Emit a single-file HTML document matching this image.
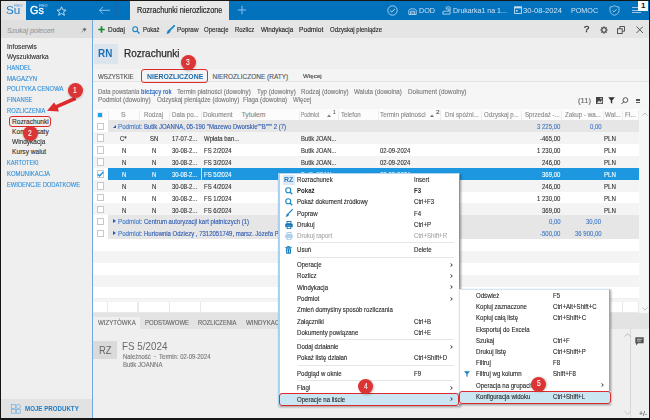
<!DOCTYPE html>
<html><head><meta charset="utf-8"><style>
html,body{margin:0;padding:0;}
body{width:650px;height:420px;overflow:hidden;position:relative;background:#161616;font-family:'Liberation Sans', sans-serif;}
</style></head><body>
<div style="position:absolute;left:1px;top:1px;width:647.5px;height:416.6px;background:#efefef;"></div>
<div style="position:absolute;left:1px;top:1px;width:647.5px;height:19px;background:#0272bd;"></div>
<div style="position:absolute;left:1px;top:1px;width:24.5px;height:19px;background:#e4e4e4;"></div>
<div style="position:absolute;left:116px;top:3px;width:0.8px;height:14px;background:#2a5f96;opacity:0.6;"></div>
<div style="position:absolute;left:130px;top:1px;width:99px;height:19.5px;background:#e8e8e8;"></div>
<div style="position:absolute;left:1px;top:20px;width:91px;height:18px;background:#dfdfdf;"></div>
<div style="position:absolute;left:1px;top:399px;width:91px;height:18.6px;background:#e2e2e2;"></div>
<div style="position:absolute;left:93px;top:20px;width:555.5px;height:18px;background:#e5e5e5;"></div>
<div style="position:absolute;left:93.5px;top:44px;width:24px;height:20px;background:#dce5ed;"></div>
<div style="position:absolute;left:93px;top:68.5px;width:555.5px;height:13.5px;background:#f4f4f4;border-bottom:1px solid #e2e2e2;box-sizing:border-box;"></div>
<div style="position:absolute;left:93px;top:82px;width:555.5px;height:26.5px;background:#f6f6f6;"></div>
<div style="position:absolute;left:93px;top:108.5px;width:546.3px;height:11.8px;background:#fcfcfc;"></div>
<div style="position:absolute;left:639.3px;top:108.5px;width:9.2px;height:204px;background:#f7f7f7;"></div>
<div style="position:absolute;left:93px;top:120.3px;width:15px;height:11.88px;background:#fff;"></div>
<div style="position:absolute;left:108px;top:120.3px;width:531.3px;height:11.88px;background:#e6e6e6;"></div>
<div style="position:absolute;left:93px;top:132.18px;width:15px;height:11.88px;background:#f4f4f4;"></div>
<div style="position:absolute;left:108px;top:132.18px;width:531.3px;height:11.88px;background:#f4f4f4;"></div>
<div style="position:absolute;left:93px;top:144.06px;width:15px;height:11.88px;background:#fff;"></div>
<div style="position:absolute;left:108px;top:144.06px;width:531.3px;height:11.88px;background:#ffffff;"></div>
<div style="position:absolute;left:93px;top:155.94px;width:15px;height:11.88px;background:#f4f4f4;"></div>
<div style="position:absolute;left:108px;top:155.94px;width:531.3px;height:11.88px;background:#f4f4f4;"></div>
<div style="position:absolute;left:93px;top:167.82px;width:15px;height:11.88px;background:#fff;"></div>
<div style="position:absolute;left:108px;top:167.82px;width:531.3px;height:11.88px;background:#1d98e0;"></div>
<div style="position:absolute;left:93px;top:179.7px;width:15px;height:11.88px;background:#f4f4f4;"></div>
<div style="position:absolute;left:108px;top:179.7px;width:531.3px;height:11.88px;background:#f4f4f4;"></div>
<div style="position:absolute;left:93px;top:191.57999999999998px;width:15px;height:11.88px;background:#fff;"></div>
<div style="position:absolute;left:108px;top:191.57999999999998px;width:531.3px;height:11.88px;background:#ffffff;"></div>
<div style="position:absolute;left:93px;top:203.46px;width:15px;height:11.88px;background:#f4f4f4;"></div>
<div style="position:absolute;left:108px;top:203.46px;width:531.3px;height:11.88px;background:#f4f4f4;"></div>
<div style="position:absolute;left:93px;top:215.34px;width:15px;height:11.88px;background:#fff;"></div>
<div style="position:absolute;left:108px;top:215.34px;width:531.3px;height:11.88px;background:#e6e6e6;"></div>
<div style="position:absolute;left:93px;top:227.22px;width:15px;height:11.88px;background:#fff;"></div>
<div style="position:absolute;left:108px;top:227.22px;width:531.3px;height:11.88px;background:#e6e6e6;"></div>
<div style="position:absolute;left:93px;top:239.10000000000002px;width:15px;height:11.88px;background:#fff;"></div>
<div style="position:absolute;left:108px;top:239.10000000000002px;width:531.3px;height:11.88px;background:#ffffff;"></div>
<div style="position:absolute;left:93px;top:250.98000000000002px;width:15px;height:11.88px;background:#f4f4f4;"></div>
<div style="position:absolute;left:108px;top:250.98000000000002px;width:531.3px;height:11.88px;background:#f4f4f4;"></div>
<div style="position:absolute;left:93px;top:262.86px;width:15px;height:11.88px;background:#fff;"></div>
<div style="position:absolute;left:108px;top:262.86px;width:531.3px;height:11.88px;background:#ffffff;"></div>
<div style="position:absolute;left:93px;top:274.74px;width:15px;height:11.88px;background:#f4f4f4;"></div>
<div style="position:absolute;left:108px;top:274.74px;width:531.3px;height:11.88px;background:#f4f4f4;"></div>
<div style="position:absolute;left:93px;top:286.62px;width:15px;height:11.88px;background:#fff;"></div>
<div style="position:absolute;left:108px;top:286.62px;width:531.3px;height:11.88px;background:#ffffff;"></div>
<div style="position:absolute;left:93px;top:298.5px;width:15px;height:11.88px;background:#f4f4f4;"></div>
<div style="position:absolute;left:108px;top:298.5px;width:531.3px;height:11.88px;background:#f4f4f4;"></div>
<div style="position:absolute;left:93px;top:302px;width:546.3px;height:10.5px;background:#e9e9e9;"></div>
<div style="position:absolute;left:93.2px;top:302px;width:13.899999999999997px;height:9.8px;background:#fff;"></div>
<div style="position:absolute;left:108.2px;top:302px;width:29.1px;height:9.8px;background:#fff;"></div>
<div style="position:absolute;left:138.5px;top:302px;width:30.29999999999999px;height:9.8px;background:#fff;"></div>
<div style="position:absolute;left:169.79999999999998px;top:302px;width:30.500000000000007px;height:9.8px;background:#fff;"></div>
<div style="position:absolute;left:201.39999999999998px;top:302px;width:96.4px;height:9.8px;background:#fff;"></div>
<div style="position:absolute;left:299.2px;top:302px;width:37.90000000000001px;height:9.8px;background:#fff;"></div>
<div style="position:absolute;left:338.5px;top:302px;width:38.6px;height:9.8px;background:#fff;"></div>
<div style="position:absolute;left:378.5px;top:302px;width:60.79999999999999px;height:9.8px;background:#fff;"></div>
<div style="position:absolute;left:440.7px;top:302px;width:39.40000000000001px;height:9.8px;background:#fff;"></div>
<div style="position:absolute;left:481.5px;top:302px;width:39.29999999999999px;height:9.8px;background:#fff;"></div>
<div style="position:absolute;left:522.2px;top:302px;width:38.6px;height:9.8px;background:#fff;"></div>
<div style="position:absolute;left:562.2px;top:302px;width:40.1px;height:9.8px;background:#fff;"></div>
<div style="position:absolute;left:603.7px;top:302px;width:18.1px;height:9.8px;background:#fff;"></div>
<div style="position:absolute;left:623.2px;top:302px;width:15.1px;height:9.8px;background:#fff;"></div>
<div style="position:absolute;left:93px;top:312.5px;width:555.5px;height:105.1px;background:#efefef;"></div>
<div style="position:absolute;left:93px;top:312.5px;width:555.5px;height:16.5px;background:#e3e3e3;"></div>
<div style="position:absolute;left:93px;top:316.6px;width:47px;height:12.4px;background:#efefef;"></div>
<div style="position:absolute;left:93px;top:340.6px;width:24px;height:18.8px;background:#dadada;"></div>
<svg style="position:absolute;left:56px;top:6px" width="11" height="10" viewBox="0 0 11 10"><path d="M5.5 0.8 L6.8 3.9 L10 4.1 L7.5 6.1 L8.4 9.3 L5.5 7.5 L2.6 9.3 L3.5 6.1 L1 4.1 L4.2 3.9 Z" fill="none" stroke="#cfe4f6" stroke-width="0.9" stroke-linejoin="round"/></svg>
<svg style="position:absolute;left:97.5px;top:5px" width="13" height="11" viewBox="0 0 13 11"><path d="M12 5.3 H1.5 M5 1.8 L1.5 5.3 L5 8.8" fill="none" stroke="#8dbfe8" stroke-width="1"/></svg>
<svg style="position:absolute;left:237px;top:5px" width="10" height="10" viewBox="0 0 10 10"><path d="M5 0.8 V9.2 M0.8 5 H9.2" stroke="#86bce6" stroke-width="1.1"/></svg>
<svg style="position:absolute;left:386.5px;top:4.5px" width="11" height="11" viewBox="0 0 11 11"><circle cx="5.5" cy="5.5" r="4.7" fill="none" stroke="#b9d7f0" stroke-width="0.9"/><path d="M3.2 5.6 L4.8 7 L7.8 4" fill="none" stroke="#d8eaf8" stroke-width="0.9"/></svg>
<svg style="position:absolute;left:407.5px;top:6.5px" width="9" height="8" viewBox="0 0 9 8"><path d="M0.8 7.5 V3.2 C2 1.2 7 1.2 8.2 3.2 V7.5 Z M2.6 7.5 V4.2 H6.4 V7.5 M3.2 6 H5.8" fill="none" stroke="#c9e0f4" stroke-width="0.8"/></svg>
<svg style="position:absolute;left:441.5px;top:5.5px" width="9" height="9" viewBox="0 0 9 9"><path d="M0.9 8.1 H8.1 V1.3 C7 0.6 5.5 0.6 4.2 1.3 V3 H7 V5.2 H3.3 L2.6 4.4 M2.6 5.6 H0.9 V8.1" fill="none" stroke="#c9e0f4" stroke-width="0.8"/></svg>
<svg style="position:absolute;left:513.5px;top:6px" width="8" height="8" viewBox="0 0 8 8"><rect x="0.6" y="0.8" width="6.8" height="6.6" fill="none" stroke="#c9e0f4" stroke-width="0.9"/><rect x="0.6" y="0.8" width="6.8" height="1.6" fill="#c9e0f4"/><rect x="2" y="4" width="1.6" height="1.5" fill="#c9e0f4"/></svg>
<svg style="position:absolute;left:608.5px;top:5px" width="11" height="11" viewBox="0 0 11 11"><path d="M5.5 0.7 C4 1.6 2.5 2 1 2 V5.5 C1 8 3 9.5 5.5 10.3 C8 9.5 10 8 10 5.5 V2 C8.5 2 7 1.6 5.5 0.7 Z" fill="none" stroke="#b9d7f0" stroke-width="0.8"/><path d="M3.6 5.6 L5 6.9 L7.5 4.2" fill="none" stroke="#c9e0f4" stroke-width="0.8"/></svg>
<div style="position:absolute;left:632.4px;top:7px;width:9px;height:0.8px;background:#9cc7ea;"></div>
<div style="position:absolute;left:632.4px;top:9.6px;width:9px;height:0.8px;background:#9cc7ea;"></div>
<div style="position:absolute;left:632.4px;top:12.2px;width:9px;height:0.8px;background:#9cc7ea;"></div>
<svg style="position:absolute;left:81px;top:27px" width="6" height="6" viewBox="0 0 6 6"><path d="M0.5 5.5 L2.3 3.7" stroke="#888" stroke-width="0.8"/><path d="M3.6 0.4 L5.6 2.4 L4.8 2.8 L3.9 4.4 L4.2 5 L1 1.8 L1.6 2.1 L3.2 1.2 Z" fill="#6f6f6f"/></svg>
<svg style="position:absolute;left:10.5px;top:404px" width="10" height="10" viewBox="0 0 10 10"><g fill="none" stroke="#74b0e0" stroke-width="0.7"><rect x="0.6" y="0.6" width="3.8" height="3.8"/><rect x="5.4" y="0.6" width="3.8" height="3.8" rx="1"/><rect x="0.6" y="5.4" width="3.8" height="3.8"/><rect x="5.4" y="5.4" width="3.8" height="3.8"/></g></svg>
<div style="position:absolute;left:92px;top:20px;width:1px;height:397.6px;background:#6eaadc;"></div>
<svg style="position:absolute;left:97.5px;top:25.5px" width="7" height="7" viewBox="0 0 7 7"><path d="M3.5 0.3 V6.7 M0.3 3.5 H6.7" stroke="#178a32" stroke-width="1.7"/></svg>
<svg style="position:absolute;left:131.5px;top:25.5px" width="8" height="8" viewBox="0 0 8 8"><circle cx="3.2" cy="3.2" r="2.4" fill="none" stroke="#1a86c8" stroke-width="1.1"/><path d="M4.9 4.9 L7.5 7.5" stroke="#1a86c8" stroke-width="1.3"/></svg>
<svg style="position:absolute;left:166px;top:25px" width="9" height="9" viewBox="0 0 9 9"><path d="M8.5 0.5 L3.6 5.4" stroke="#1a86c8" stroke-width="1.6" stroke-linecap="round"/><path d="M3.8 4.6 C2.2 4.6 1.5 5.6 1.3 6.8 C1.1 7.7 0.7 8.2 0.2 8.6 C2 8.9 4.2 8.3 4.6 6 Z" fill="#1a86c8"/></svg>
<svg style="position:absolute;left:599.5px;top:25.5px" width="8" height="8" viewBox="0 0 8 8"><circle cx="4" cy="4" r="2.2" fill="none" stroke="#444" stroke-width="1.1"/><g stroke="#444" stroke-width="1.2"><path d="M4 0.3 V1.8 M4 6.2 V7.7 M0.3 4 H1.8 M6.2 4 H7.7 M1.4 1.4 L2.4 2.4 M5.6 5.6 L6.6 6.6 M1.4 6.6 L2.4 5.6 M5.6 2.4 L6.6 1.4"/></g></svg>
<svg style="position:absolute;left:616.5px;top:25.5px" width="8" height="8" viewBox="0 0 8 8"><g fill="none" stroke="#444" stroke-width="0.9"><rect x="0.5" y="2.8" width="4.7" height="4.7"/><path d="M2.8 2.8 V0.5 H7.5 V5.2 H5.2"/></g></svg>
<svg style="position:absolute;left:635.5px;top:26px" width="7.5" height="7.5" viewBox="0 0 7.5 7.5"><path d="M0.5 0.5 L7 7 M7 0.5 L0.5 7" stroke="#444" stroke-width="0.9"/></svg>
<svg style="position:absolute;left:595.5px;top:97px" width="7" height="7" viewBox="0 0 7 7"><rect x="0" y="0" width="7" height="7" fill="#444"/><path d="M0.8 6.2 L3 3.6 L4.4 5 L6.2 2.8 V6.2 Z" fill="#ddd"/><rect x="4.4" y="0.9" width="1.4" height="1.4" fill="#ddd"/></svg>
<svg style="position:absolute;left:608px;top:97px" width="7" height="7" viewBox="0 0 7 7"><path d="M0.2 0.3 H6.8 L4.2 3.4 V6.8 L2.8 5.8 V3.4 Z" fill="#333"/></svg>
<svg style="position:absolute;left:621px;top:96.8px" width="7.5" height="7.5" viewBox="0 0 7.5 7.5"><circle cx="4.4" cy="3.1" r="2.4" fill="none" stroke="#444" stroke-width="0.9"/><path d="M2.6 4.9 L0.5 7" stroke="#444" stroke-width="1"/></svg>
<div style="position:absolute;left:635.8px;top:98.6px;width:4px;height:0.8px;background:#555;"></div>
<div style="position:absolute;left:635.8px;top:100.4px;width:4px;height:0.8px;background:#555;"></div>
<div style="position:absolute;left:635.8px;top:102.2px;width:4px;height:0.8px;background:#555;"></div>
<div style="position:absolute;left:107.5px;top:109.5px;width:0.7px;height:10px;background:#ececec;"></div>
<div style="position:absolute;left:138.5px;top:109.5px;width:0.7px;height:10px;background:#ececec;"></div>
<div style="position:absolute;left:169px;top:109.5px;width:0.7px;height:10px;background:#ececec;"></div>
<div style="position:absolute;left:201px;top:109.5px;width:0.7px;height:10px;background:#ececec;"></div>
<div style="position:absolute;left:298.5px;top:109.5px;width:0.7px;height:10px;background:#ececec;"></div>
<div style="position:absolute;left:337.8px;top:109.5px;width:0.7px;height:10px;background:#ececec;"></div>
<div style="position:absolute;left:377.8px;top:109.5px;width:0.7px;height:10px;background:#ececec;"></div>
<div style="position:absolute;left:440px;top:109.5px;width:0.7px;height:10px;background:#ececec;"></div>
<div style="position:absolute;left:480.8px;top:109.5px;width:0.7px;height:10px;background:#ececec;"></div>
<div style="position:absolute;left:521.4px;top:109.5px;width:0.7px;height:10px;background:#ececec;"></div>
<div style="position:absolute;left:561.4px;top:109.5px;width:0.7px;height:10px;background:#ececec;"></div>
<div style="position:absolute;left:603px;top:109.5px;width:0.7px;height:10px;background:#ececec;"></div>
<div style="position:absolute;left:622.3px;top:109.5px;width:0.7px;height:10px;background:#ececec;"></div>
<div style="position:absolute;left:638px;top:109.5px;width:0.7px;height:10px;background:#ececec;"></div>
<div style="position:absolute;left:97.2px;top:112.2px;width:5.8px;height:5.6px;background:#fff;border:0.5px solid #e8e8e8;box-sizing:border-box;"></div>
<div style="position:absolute;left:98px;top:113px;width:4.1px;height:3.9px;background:#12a3ea;border-radius:0.6px;"></div>
<svg style="position:absolute;left:327px;top:113.5px" width="4" height="3" viewBox="0 0 4 3"><path d="M0 3 L2 0.5 L4 3 Z" fill="#777"/></svg>
<svg style="position:absolute;left:430px;top:113.5px" width="4" height="3" viewBox="0 0 4 3"><path d="M0 3 L2 0.5 L4 3 Z" fill="#777"/></svg>
<svg style="position:absolute;left:642px;top:112px" width="6" height="4" viewBox="0 0 6 4"><path d="M0.5 3.5 L3 1 L5.5 3.5" fill="none" stroke="#aaa" stroke-width="0.7"/></svg>
<svg style="position:absolute;left:642px;top:307px" width="6" height="4" viewBox="0 0 6 4"><path d="M0.5 0.5 L3 3 L5.5 0.5" fill="none" stroke="#aaa" stroke-width="0.7"/></svg>
<div style="position:absolute;left:96.5px;top:122.6px;width:7.7px;height:7.5px;background:#fff;border:0.7px solid #c8c8c8;box-sizing:border-box;"></div>
<svg style="position:absolute;left:112.5px;top:124.74px" width="3" height="3" viewBox="0 0 3 3"><path d="M3 0 V3 H0 Z" fill="#2c59b0"/></svg>
<div style="position:absolute;left:96.5px;top:134.48000000000002px;width:7.7px;height:7.5px;background:#fff;border:0.7px solid #c8c8c8;box-sizing:border-box;"></div>
<div style="position:absolute;left:96.5px;top:146.36px;width:7.7px;height:7.5px;background:#fff;border:0.7px solid #c8c8c8;box-sizing:border-box;"></div>
<div style="position:absolute;left:96.5px;top:158.24px;width:7.7px;height:7.5px;background:#fff;border:0.7px solid #c8c8c8;box-sizing:border-box;"></div>
<div style="position:absolute;left:200.6px;top:167.82px;width:0.8px;height:11.88px;background:#bfe2f7;"></div>
<div style="position:absolute;left:96.5px;top:170.12px;width:7.7px;height:7.5px;background:#fff;border:0.7px solid #c8c8c8;box-sizing:border-box;"></div>
<svg style="position:absolute;left:97px;top:170.82px" width="7" height="6" viewBox="0 0 7 6"><path d="M0.8 3.2 L2.6 5 L6.3 1" fill="none" stroke="#1a8fd8" stroke-width="1.3"/></svg>
<div style="position:absolute;left:96.5px;top:182.0px;width:7.7px;height:7.5px;background:#fff;border:0.7px solid #c8c8c8;box-sizing:border-box;"></div>
<div style="position:absolute;left:96.5px;top:193.88px;width:7.7px;height:7.5px;background:#fff;border:0.7px solid #c8c8c8;box-sizing:border-box;"></div>
<div style="position:absolute;left:96.5px;top:205.76000000000002px;width:7.7px;height:7.5px;background:#fff;border:0.7px solid #c8c8c8;box-sizing:border-box;"></div>
<div style="position:absolute;left:96.5px;top:217.64000000000001px;width:7.7px;height:7.5px;background:#fff;border:0.7px solid #c8c8c8;box-sizing:border-box;"></div>
<svg style="position:absolute;left:112.8px;top:219.48px" width="3" height="4" viewBox="0 0 3 4"><path d="M0 0 L3 2 L0 4 Z" fill="#2c59b0"/></svg>
<div style="position:absolute;left:96.5px;top:229.52px;width:7.7px;height:7.5px;background:#fff;border:0.7px solid #c8c8c8;box-sizing:border-box;"></div>
<svg style="position:absolute;left:112.8px;top:231.36px" width="3" height="4" viewBox="0 0 3 4"><path d="M0 0 L3 2 L0 4 Z" fill="#2c59b0"/></svg>
<div style="position:absolute;left:630.3px;top:329px;width:0.7px;height:88.6px;background:#d8d8d8;"></div>
<svg style="position:absolute;left:624px;top:332.5px" width="7" height="4" viewBox="0 0 7 4"><path d="M0.5 3.5 L3.5 0.8 L6.5 3.5" fill="none" stroke="#aaa" stroke-width="0.7"/></svg>
<svg style="position:absolute;left:634.5px;top:336.5px" width="9" height="9" viewBox="0 0 9 9"><path d="M0.3 0.3 H8.7 V6.3 H3 L1 8.5 V6.3 H0.3 Z" fill="#555"/><path d="M2 2.3 H7 M2 4.1 H6" stroke="#eee" stroke-width="0.7"/></svg>
<svg style="position:absolute;left:624px;top:411px" width="7" height="4" viewBox="0 0 7 4"><path d="M0.5 0.5 L3.5 3.2 L6.5 0.5" fill="none" stroke="#bbb" stroke-width="0.7"/></svg>
<div style="position:absolute;left:6.10px;top:-0.76px;line-height:22.00px;font-size:11px;font-weight:400;color:#1a7ccb;white-space:pre;transform:scaleX(1.0618);transform-origin:0 50%;">Su</div>
<div style="position:absolute;left:13.77px;top:3.01px;line-height:6.00px;font-size:3px;font-weight:400;color:#7ab0dc;white-space:pre;transform:scaleX(1.2996);transform-origin:0 50%;-webkit-text-stroke:0.12px #7ab0dc;">PRO</div>
<div style="position:absolute;left:30.15px;top:-0.76px;line-height:22.00px;font-size:11px;font-weight:400;color:#ffffff;white-space:pre;transform:scaleX(0.9810);transform-origin:0 50%;-webkit-text-stroke:0.3px #fff;">Gs</div>
<div style="position:absolute;left:38.77px;top:3.01px;line-height:6.00px;font-size:3px;font-weight:400;color:#8fc0ea;white-space:pre;transform:scaleX(1.2996);transform-origin:0 50%;-webkit-text-stroke:0.12px #8fc0ea;">PRO</div>
<div style="position:absolute;left:137.36px;top:3.01px;line-height:16.40px;font-size:8.2px;font-weight:400;color:#222;white-space:pre;transform:scaleX(0.8933);transform-origin:0 50%;-webkit-text-stroke:0.15px #222;">Rozrachunki nierozliczone</div>
<div style="position:absolute;left:418.57px;top:2.55px;line-height:15.60px;font-size:7.8px;font-weight:400;color:#cfe2f4;white-space:pre;transform:scaleX(0.9273);transform-origin:0 50%;-webkit-text-stroke:0px;">DOD</div>
<div style="position:absolute;left:452.58px;top:2.55px;line-height:15.60px;font-size:7.8px;font-weight:400;color:#cfe2f4;white-space:pre;transform:scaleX(0.9002);transform-origin:0 50%;-webkit-text-stroke:0px;">Drukarka1 na 1...</div>
<div style="position:absolute;left:523.34px;top:2.55px;line-height:15.60px;font-size:7.8px;font-weight:400;color:#cfe2f4;white-space:pre;transform:scaleX(0.9806);transform-origin:0 50%;-webkit-text-stroke:0px;">30-08-2024</div>
<div style="position:absolute;left:570.97px;top:2.55px;line-height:15.60px;font-size:7.8px;font-weight:400;color:#cfe2f4;white-space:pre;transform:scaleX(0.9182);transform-origin:0 50%;-webkit-text-stroke:0px;">POMOC</div>
<div style="position:absolute;left:6.98px;top:23.62px;line-height:14.00px;font-size:7px;font-weight:400;font-style:italic;color:#9a9a9a;white-space:pre;-webkit-text-stroke:0.12px #9a9a9a;">Szukaj poleceń</div>
<div style="position:absolute;left:6.80px;top:40.16px;line-height:13.20px;font-size:6.6px;font-weight:400;color:#333333;white-space:pre;transform:scaleX(1.0071);transform-origin:0 50%;-webkit-text-stroke:0.12px #333333;">Infoserwis</div>
<div style="position:absolute;left:6.81px;top:50.16px;line-height:13.20px;font-size:6.6px;font-weight:400;color:#333333;white-space:pre;transform:scaleX(0.9882);transform-origin:0 50%;-webkit-text-stroke:0.12px #333333;">Wyszukiwarka</div>
<div style="position:absolute;left:6.84px;top:61.16px;line-height:13.20px;font-size:6.6px;font-weight:400;color:#3190da;white-space:pre;transform:scaleX(0.9092);transform-origin:0 50%;-webkit-text-stroke:0.12px #3190da;">HANDEL</div>
<div style="position:absolute;left:6.83px;top:72.16px;line-height:13.20px;font-size:6.6px;font-weight:400;color:#3190da;white-space:pre;transform:scaleX(0.9272);transform-origin:0 50%;-webkit-text-stroke:0.12px #3190da;">MAGAZYN</div>
<div style="position:absolute;left:6.85px;top:82.16px;line-height:13.20px;font-size:6.6px;font-weight:400;color:#3190da;white-space:pre;transform:scaleX(0.8947);transform-origin:0 50%;-webkit-text-stroke:0.12px #3190da;">POLITYKA CENOWA</div>
<div style="position:absolute;left:6.85px;top:93.16px;line-height:13.20px;font-size:6.6px;font-weight:400;color:#3190da;white-space:pre;transform:scaleX(0.8925);transform-origin:0 50%;-webkit-text-stroke:0.12px #3190da;">FINANSE</div>
<div style="position:absolute;left:6.85px;top:104.16px;line-height:13.20px;font-size:6.6px;font-weight:400;color:#3190da;white-space:pre;transform:scaleX(0.8828);transform-origin:0 50%;-webkit-text-stroke:0.12px #3190da;">ROZLICZENIA</div>
<div style="position:absolute;left:12.10px;top:115.16px;line-height:13.20px;font-size:6.6px;font-weight:400;color:#333333;white-space:pre;-webkit-text-stroke:0.12px #333333;">Rozrachunki</div>
<div style="position:absolute;left:12.10px;top:125.16px;line-height:13.20px;font-size:6.6px;font-weight:400;color:#333333;white-space:pre;-webkit-text-stroke:0.12px #333333;">Kompensaty</div>
<div style="position:absolute;left:12.11px;top:135.16px;line-height:13.20px;font-size:6.6px;font-weight:400;color:#333333;white-space:pre;transform:scaleX(0.9870);transform-origin:0 50%;-webkit-text-stroke:0.12px #333333;">Windykacja</div>
<div style="position:absolute;left:12.10px;top:145.16px;line-height:13.20px;font-size:6.6px;font-weight:400;color:#333333;white-space:pre;-webkit-text-stroke:0.12px #333333;">Kursy walut</div>
<div style="position:absolute;left:6.86px;top:156.16px;line-height:13.20px;font-size:6.6px;font-weight:400;color:#3190da;white-space:pre;transform:scaleX(0.8473);transform-origin:0 50%;-webkit-text-stroke:0.12px #3190da;">KARTOTEKI</div>
<div style="position:absolute;left:6.84px;top:167.16px;line-height:13.20px;font-size:6.6px;font-weight:400;color:#3190da;white-space:pre;transform:scaleX(0.9029);transform-origin:0 50%;-webkit-text-stroke:0.12px #3190da;">KOMUNIKACJA</div>
<div style="position:absolute;left:6.85px;top:178.16px;line-height:13.20px;font-size:6.6px;font-weight:400;color:#3190da;white-space:pre;transform:scaleX(0.8776);transform-origin:0 50%;-webkit-text-stroke:0.12px #3190da;">EWIDENCJE DODATKOWE</div>
<div style="position:absolute;left:24.63px;top:403.43px;line-height:12.80px;font-size:6.4px;font-weight:700;color:#1c7cc8;white-space:pre;transform:scaleX(0.9640);transform-origin:0 50%;">MOJE PRODUKTY</div>
<div style="position:absolute;left:108.11px;top:22.76px;line-height:13.80px;font-size:6.9px;font-weight:400;color:#222;white-space:pre;transform:scaleX(0.9367);transform-origin:0 50%;-webkit-text-stroke:0.12px #222;">Dodaj</div>
<div style="position:absolute;left:143.25px;top:22.76px;line-height:13.80px;font-size:6.9px;font-weight:400;color:#222;white-space:pre;transform:scaleX(0.8566);transform-origin:0 50%;-webkit-text-stroke:0.12px #222;">Pokaż</div>
<div style="position:absolute;left:176.92px;top:22.76px;line-height:13.80px;font-size:6.9px;font-weight:400;color:#222;white-space:pre;transform:scaleX(0.9181);transform-origin:0 50%;-webkit-text-stroke:0.12px #222;">Popraw</div>
<div style="position:absolute;left:204.44px;top:22.76px;line-height:13.80px;font-size:6.9px;font-weight:400;color:#222;white-space:pre;transform:scaleX(0.8769);transform-origin:0 50%;-webkit-text-stroke:0.12px #222;">Operacje</div>
<div style="position:absolute;left:235.44px;top:22.76px;line-height:13.80px;font-size:6.9px;font-weight:400;color:#222;white-space:pre;transform:scaleX(0.8649);transform-origin:0 50%;-webkit-text-stroke:0.12px #222;">Rozlicz</div>
<div style="position:absolute;left:260.52px;top:22.76px;line-height:13.80px;font-size:6.9px;font-weight:400;color:#222;white-space:pre;transform:scaleX(0.9126);transform-origin:0 50%;-webkit-text-stroke:0.12px #222;">Windykacja</div>
<div style="position:absolute;left:299.00px;top:22.76px;line-height:13.80px;font-size:6.9px;font-weight:400;color:#222;white-space:pre;transform:scaleX(0.9651);transform-origin:0 50%;-webkit-text-stroke:0.12px #222;">Podmiot</div>
<div style="position:absolute;left:329.64px;top:22.76px;line-height:13.80px;font-size:6.9px;font-weight:400;color:#222;white-space:pre;transform:scaleX(0.8704);transform-origin:0 50%;-webkit-text-stroke:0.12px #222;">Odzyskaj pieniądze</div>
<div style="position:absolute;left:584.42px;top:22.01px;line-height:16.40px;font-size:8.2px;font-weight:400;color:#333;white-space:pre;transform:scaleX(1.1737);transform-origin:0 50%;-webkit-text-stroke:0.3px #333;">?</div>
<div style="position:absolute;left:98.01px;top:44.05px;line-height:20.80px;font-size:10.4px;font-weight:700;color:#1f6fb5;white-space:pre;transform:scaleX(0.9515);transform-origin:0 50%;">RN</div>
<div style="position:absolute;left:124.20px;top:44.05px;line-height:20.80px;font-size:10.4px;font-weight:400;color:#2a2a2a;white-space:pre;transform:scaleX(0.9625);transform-origin:0 50%;-webkit-text-stroke:0.25px #2a2a2a;">Rozrachunki</div>
<div style="position:absolute;left:97.63px;top:70.30px;line-height:13.00px;font-size:6.5px;font-weight:400;color:#555;white-space:pre;transform:scaleX(0.9515);transform-origin:0 50%;-webkit-text-stroke:0.12px #555;">WSZYSTKIE</div>
<div style="position:absolute;left:146.99px;top:69.89px;line-height:13.60px;font-size:6.8px;font-weight:700;color:#1c6aa8;white-space:pre;transform:scaleX(1.0128);transform-origin:0 50%;">NIEROZLICZONE</div>
<div style="position:absolute;left:212.51px;top:70.30px;line-height:13.00px;font-size:6.5px;font-weight:400;color:#555;white-space:pre;-webkit-text-stroke:0.12px #555;">NIEROZLICZONE (RATY)</div>
<div style="position:absolute;left:302.92px;top:71.11px;line-height:11.80px;font-size:5.9px;font-weight:400;color:#444;white-space:pre;transform:scaleX(1.0601);transform-origin:0 50%;-webkit-text-stroke:0.12px #444;">Więcej</div>
<div style="position:absolute;left:97.54px;top:84.89px;line-height:13.60px;font-size:6.8px;font-weight:400;color:#7a7a7a;white-space:pre;transform:scaleX(0.8796);transform-origin:0 50%;-webkit-text-stroke:0.12px #7a7a7a;">Data powstania</div>
<div style="position:absolute;left:140.76px;top:85.16px;line-height:13.20px;font-size:6.6px;font-weight:700;color:#2d69c4;white-space:pre;transform:scaleX(0.8540);transform-origin:0 50%;">bieżący rok</div>
<div style="position:absolute;left:177.03px;top:84.89px;line-height:13.60px;font-size:6.8px;font-weight:400;color:#7a7a7a;white-space:pre;transform:scaleX(0.9165);transform-origin:0 50%;-webkit-text-stroke:0.12px #7a7a7a;">Termin płatności (dowolny)</div>
<div style="position:absolute;left:256.63px;top:84.89px;line-height:13.60px;font-size:6.8px;font-weight:400;color:#7a7a7a;white-space:pre;transform:scaleX(0.9157);transform-origin:0 50%;-webkit-text-stroke:0.12px #7a7a7a;">Typ (dowolny)</div>
<div style="position:absolute;left:300.63px;top:84.89px;line-height:13.60px;font-size:6.8px;font-weight:400;color:#7a7a7a;white-space:pre;transform:scaleX(0.9072);transform-origin:0 50%;-webkit-text-stroke:0.12px #7a7a7a;">Rodzaj (dowolny)</div>
<div style="position:absolute;left:354.03px;top:84.89px;line-height:13.60px;font-size:6.8px;font-weight:400;color:#7a7a7a;white-space:pre;transform:scaleX(0.9088);transform-origin:0 50%;-webkit-text-stroke:0.12px #7a7a7a;">Waluta (dowolna)</div>
<div style="position:absolute;left:408.12px;top:84.89px;line-height:13.60px;font-size:6.8px;font-weight:400;color:#7a7a7a;white-space:pre;transform:scaleX(0.9378);transform-origin:0 50%;-webkit-text-stroke:0.12px #7a7a7a;">Dokument (dowolny)</div>
<div style="position:absolute;left:97.92px;top:92.89px;line-height:13.60px;font-size:6.8px;font-weight:400;color:#7a7a7a;white-space:pre;transform:scaleX(0.9355);transform-origin:0 50%;-webkit-text-stroke:0.12px #7a7a7a;">Podmiot (dowolny)</div>
<div style="position:absolute;left:156.73px;top:92.89px;line-height:13.60px;font-size:6.8px;font-weight:400;color:#7a7a7a;white-space:pre;transform:scaleX(0.9108);transform-origin:0 50%;-webkit-text-stroke:0.12px #7a7a7a;">Odzyskaj pieniądze (dowolny)</div>
<div style="position:absolute;left:242.83px;top:92.89px;line-height:13.60px;font-size:6.8px;font-weight:400;color:#7a7a7a;white-space:pre;transform:scaleX(0.9054);transform-origin:0 50%;-webkit-text-stroke:0.12px #7a7a7a;">Flaga (dowolna)</div>
<div style="position:absolute;left:292.63px;top:92.89px;line-height:13.60px;font-size:6.8px;font-weight:400;color:#7a7a7a;white-space:pre;transform:scaleX(0.8984);transform-origin:0 50%;-webkit-text-stroke:0.12px #7a7a7a;">Więcej</div>
<div style="position:absolute;left:577.55px;top:94.30px;line-height:13.00px;font-size:6.5px;font-weight:400;color:#666;white-space:pre;transform:scaleX(1.1653);transform-origin:0 50%;-webkit-text-stroke:0.12px #666;">(11)</div>
<div style="position:absolute;left:121.08px;top:107.89px;line-height:13.60px;font-size:6.8px;font-weight:400;color:#8a8a8a;white-space:pre;transform:scaleX(1.0185);transform-origin:0 50%;-webkit-text-stroke:0.12px #8a8a8a;">S</div>
<div style="position:absolute;left:144.23px;top:107.89px;line-height:13.60px;font-size:6.8px;font-weight:400;color:#8a8a8a;white-space:pre;transform:scaleX(0.9039);transform-origin:0 50%;-webkit-text-stroke:0.12px #8a8a8a;">Rodzaj</div>
<div style="position:absolute;left:171.63px;top:107.89px;line-height:13.60px;font-size:6.8px;font-weight:400;color:#8a8a8a;white-space:pre;transform:scaleX(0.9069);transform-origin:0 50%;-webkit-text-stroke:0.12px #8a8a8a;">Data po...</div>
<div style="position:absolute;left:203.31px;top:107.89px;line-height:13.60px;font-size:6.8px;font-weight:400;color:#8a8a8a;white-space:pre;transform:scaleX(0.9580);transform-origin:0 50%;-webkit-text-stroke:0.12px #8a8a8a;">Dokument</div>
<div style="position:absolute;left:241.59px;top:107.89px;line-height:13.60px;font-size:6.8px;font-weight:400;color:#8a8a8a;white-space:pre;-webkit-text-stroke:0.12px #8a8a8a;">Tytułem</div>
<div style="position:absolute;left:300.70px;top:107.89px;line-height:13.60px;font-size:6.8px;font-weight:400;color:#8a8a8a;white-space:pre;transform:scaleX(0.7255);transform-origin:0 50%;-webkit-text-stroke:0.12px #8a8a8a;">Podmiot</div>
<div style="position:absolute;left:333.02px;top:107.05px;line-height:10.40px;font-size:5.2px;font-weight:400;color:#555;white-space:pre;transform:scaleX(0.8824);transform-origin:0 50%;-webkit-text-stroke:0.12px #555;">1</div>
<div style="position:absolute;left:340.63px;top:107.89px;line-height:13.60px;font-size:6.8px;font-weight:400;color:#8a8a8a;white-space:pre;transform:scaleX(0.9002);transform-origin:0 50%;-webkit-text-stroke:0.12px #8a8a8a;">Telefon</div>
<div style="position:absolute;left:379.62px;top:107.89px;line-height:13.60px;font-size:6.8px;font-weight:400;color:#8a8a8a;white-space:pre;transform:scaleX(0.9318);transform-origin:0 50%;-webkit-text-stroke:0.12px #8a8a8a;">Termin płatności</div>
<div style="position:absolute;left:435.91px;top:107.05px;line-height:10.40px;font-size:5.2px;font-weight:400;color:#555;white-space:pre;transform:scaleX(1.2353);transform-origin:0 50%;-webkit-text-stroke:0.12px #555;">2</div>
<div style="position:absolute;left:444.63px;top:107.89px;line-height:13.60px;font-size:6.8px;font-weight:400;color:#8a8a8a;white-space:pre;transform:scaleX(0.9019);transform-origin:0 50%;-webkit-text-stroke:0.12px #8a8a8a;">Dni spóźni...</div>
<div style="position:absolute;left:483.64px;top:107.89px;line-height:13.60px;font-size:6.8px;font-weight:400;color:#8a8a8a;white-space:pre;transform:scaleX(0.8836);transform-origin:0 50%;-webkit-text-stroke:0.12px #8a8a8a;">Odzyskaj p...</div>
<div style="position:absolute;left:524.63px;top:107.89px;line-height:13.60px;font-size:6.8px;font-weight:400;color:#8a8a8a;white-space:pre;transform:scaleX(0.9015);transform-origin:0 50%;-webkit-text-stroke:0.12px #8a8a8a;">Sprzedaż -...</div>
<div style="position:absolute;left:564.63px;top:107.89px;line-height:13.60px;font-size:6.8px;font-weight:400;color:#8a8a8a;white-space:pre;transform:scaleX(0.9095);transform-origin:0 50%;-webkit-text-stroke:0.12px #8a8a8a;">Zakup - wa...</div>
<div style="position:absolute;left:604.62px;top:107.89px;line-height:13.60px;font-size:6.8px;font-weight:400;color:#8a8a8a;white-space:pre;transform:scaleX(0.9197);transform-origin:0 50%;-webkit-text-stroke:0.12px #8a8a8a;">Wal...</div>
<div style="position:absolute;left:624.61px;top:107.89px;line-height:13.60px;font-size:6.8px;font-weight:400;color:#8a8a8a;white-space:pre;transform:scaleX(0.9513);transform-origin:0 50%;-webkit-text-stroke:0.12px #8a8a8a;">Fl...</div>
<div style="position:absolute;left:117.93px;top:119.89px;line-height:13.60px;font-size:6.8px;font-weight:400;color:#3f79c9;white-space:pre;transform:scaleX(0.9150);transform-origin:0 50%;-webkit-text-stroke:0.12px #3f79c9;">Podmiot:</div>
<div style="position:absolute;left:143.94px;top:119.89px;line-height:13.60px;font-size:6.8px;font-weight:400;color:#2c59b0;white-space:pre;transform:scaleX(0.8800);transform-origin:0 50%;-webkit-text-stroke:0.12px #2c59b0;">Butik JOANNA, 05-190 "Mazewo Dworskie""B""" 2 (7)</div>
<div style="position:absolute;left:536.87px;top:119.89px;line-height:13.60px;font-size:6.8px;font-weight:400;color:#3f79c9;white-space:pre;transform:scaleX(0.8800);transform-origin:0 50%;-webkit-text-stroke:0.12px #3f79c9;">3 225,00</div>
<div style="position:absolute;left:589.71px;top:119.89px;line-height:13.60px;font-size:6.8px;font-weight:400;color:#3f79c9;white-space:pre;transform:scaleX(0.8800);transform-origin:0 50%;-webkit-text-stroke:0.12px #3f79c9;">0,00</div>
<div style="position:absolute;left:120.47px;top:131.89px;line-height:13.60px;font-size:6.8px;font-weight:400;color:#333;white-space:pre;transform:scaleX(0.8800);transform-origin:0 50%;-webkit-text-stroke:0.12px #333;">C*</div>
<div style="position:absolute;left:150.04px;top:131.89px;line-height:13.60px;font-size:6.8px;font-weight:400;color:#333;white-space:pre;transform:scaleX(0.8800);transform-origin:0 50%;-webkit-text-stroke:0.12px #333;">SN</div>
<div style="position:absolute;left:172.45px;top:131.89px;line-height:13.60px;font-size:6.8px;font-weight:400;color:#333;white-space:pre;transform:scaleX(0.8664);transform-origin:0 50%;-webkit-text-stroke:0.12px #333;">17-07-2...</div>
<div style="position:absolute;left:204.04px;top:131.89px;line-height:13.60px;font-size:6.8px;font-weight:400;color:#333;white-space:pre;transform:scaleX(0.8800);transform-origin:0 50%;-webkit-text-stroke:0.12px #333;">Wpłata ban...</div>
<div style="position:absolute;left:301.25px;top:131.89px;line-height:13.60px;font-size:6.8px;font-weight:400;color:#333;white-space:pre;transform:scaleX(0.8679);transform-origin:0 50%;-webkit-text-stroke:0.12px #333;">Butik JOAN...</div>
<div style="position:absolute;left:540.26px;top:131.89px;line-height:13.60px;font-size:6.8px;font-weight:400;color:#333;white-space:pre;transform:scaleX(0.8800);transform-origin:0 50%;-webkit-text-stroke:0.12px #333;">-465,00</div>
<div style="position:absolute;left:604.23px;top:131.89px;line-height:13.60px;font-size:6.8px;font-weight:400;color:#333;white-space:pre;transform:scaleX(0.9099);transform-origin:0 50%;-webkit-text-stroke:0.12px #333;">PLN</div>
<div style="position:absolute;left:121.63px;top:143.89px;line-height:13.60px;font-size:6.8px;font-weight:400;color:#333;white-space:pre;transform:scaleX(0.8800);transform-origin:0 50%;-webkit-text-stroke:0.12px #333;">N</div>
<div style="position:absolute;left:152.03px;top:143.89px;line-height:13.60px;font-size:6.8px;font-weight:400;color:#333;white-space:pre;transform:scaleX(0.8800);transform-origin:0 50%;-webkit-text-stroke:0.12px #333;">N</div>
<div style="position:absolute;left:172.45px;top:143.89px;line-height:13.60px;font-size:6.8px;font-weight:400;color:#333;white-space:pre;transform:scaleX(0.8664);transform-origin:0 50%;-webkit-text-stroke:0.12px #333;">30-08-2...</div>
<div style="position:absolute;left:204.04px;top:143.89px;line-height:13.60px;font-size:6.8px;font-weight:400;color:#333;white-space:pre;transform:scaleX(0.8800);transform-origin:0 50%;-webkit-text-stroke:0.12px #333;">FS 2/2024</div>
<div style="position:absolute;left:301.25px;top:143.89px;line-height:13.60px;font-size:6.8px;font-weight:400;color:#333;white-space:pre;transform:scaleX(0.8679);transform-origin:0 50%;-webkit-text-stroke:0.12px #333;">Butik JOAN...</div>
<div style="position:absolute;left:379.64px;top:143.89px;line-height:13.60px;font-size:6.8px;font-weight:400;color:#333;white-space:pre;transform:scaleX(0.8715);transform-origin:0 50%;-webkit-text-stroke:0.12px #333;">02-09-2024</div>
<div style="position:absolute;left:537.27px;top:143.89px;line-height:13.60px;font-size:6.8px;font-weight:400;color:#333;white-space:pre;transform:scaleX(0.8800);transform-origin:0 50%;-webkit-text-stroke:0.12px #333;">1 230,00</div>
<div style="position:absolute;left:604.23px;top:143.89px;line-height:13.60px;font-size:6.8px;font-weight:400;color:#333;white-space:pre;transform:scaleX(0.9099);transform-origin:0 50%;-webkit-text-stroke:0.12px #333;">PLN</div>
<div style="position:absolute;left:121.63px;top:155.89px;line-height:13.60px;font-size:6.8px;font-weight:400;color:#333;white-space:pre;transform:scaleX(0.8800);transform-origin:0 50%;-webkit-text-stroke:0.12px #333;">N</div>
<div style="position:absolute;left:152.03px;top:155.89px;line-height:13.60px;font-size:6.8px;font-weight:400;color:#333;white-space:pre;transform:scaleX(0.8800);transform-origin:0 50%;-webkit-text-stroke:0.12px #333;">N</div>
<div style="position:absolute;left:172.45px;top:155.89px;line-height:13.60px;font-size:6.8px;font-weight:400;color:#333;white-space:pre;transform:scaleX(0.8664);transform-origin:0 50%;-webkit-text-stroke:0.12px #333;">30-08-2...</div>
<div style="position:absolute;left:204.04px;top:155.89px;line-height:13.60px;font-size:6.8px;font-weight:400;color:#333;white-space:pre;transform:scaleX(0.8800);transform-origin:0 50%;-webkit-text-stroke:0.12px #333;">FS 3/2024</div>
<div style="position:absolute;left:301.25px;top:155.89px;line-height:13.60px;font-size:6.8px;font-weight:400;color:#333;white-space:pre;transform:scaleX(0.8679);transform-origin:0 50%;-webkit-text-stroke:0.12px #333;">Butik JOAN...</div>
<div style="position:absolute;left:379.64px;top:155.89px;line-height:13.60px;font-size:6.8px;font-weight:400;color:#333;white-space:pre;transform:scaleX(0.8715);transform-origin:0 50%;-webkit-text-stroke:0.12px #333;">02-09-2024</div>
<div style="position:absolute;left:542.26px;top:155.89px;line-height:13.60px;font-size:6.8px;font-weight:400;color:#333;white-space:pre;transform:scaleX(0.8800);transform-origin:0 50%;-webkit-text-stroke:0.12px #333;">246,00</div>
<div style="position:absolute;left:604.23px;top:155.89px;line-height:13.60px;font-size:6.8px;font-weight:400;color:#333;white-space:pre;transform:scaleX(0.9099);transform-origin:0 50%;-webkit-text-stroke:0.12px #333;">PLN</div>
<div style="position:absolute;left:121.63px;top:167.89px;line-height:13.60px;font-size:6.8px;font-weight:400;color:#fff;white-space:pre;transform:scaleX(0.8800);transform-origin:0 50%;-webkit-text-stroke:0.12px #fff;">N</div>
<div style="position:absolute;left:152.03px;top:167.89px;line-height:13.60px;font-size:6.8px;font-weight:400;color:#fff;white-space:pre;transform:scaleX(0.8800);transform-origin:0 50%;-webkit-text-stroke:0.12px #fff;">N</div>
<div style="position:absolute;left:172.45px;top:167.89px;line-height:13.60px;font-size:6.8px;font-weight:400;color:#fff;white-space:pre;transform:scaleX(0.8664);transform-origin:0 50%;-webkit-text-stroke:0.12px #fff;">30-08-2...</div>
<div style="position:absolute;left:204.04px;top:167.89px;line-height:13.60px;font-size:6.8px;font-weight:400;color:#fff;white-space:pre;transform:scaleX(0.8800);transform-origin:0 50%;-webkit-text-stroke:0.12px #fff;">FS 5/2024</div>
<div style="position:absolute;left:301.25px;top:167.89px;line-height:13.60px;font-size:6.8px;font-weight:400;color:#fff;white-space:pre;transform:scaleX(0.8679);transform-origin:0 50%;-webkit-text-stroke:0.12px #fff;">Butik JOAN...</div>
<div style="position:absolute;left:379.64px;top:167.89px;line-height:13.60px;font-size:6.8px;font-weight:400;color:#fff;white-space:pre;transform:scaleX(0.8715);transform-origin:0 50%;-webkit-text-stroke:0.12px #fff;">02-09-2024</div>
<div style="position:absolute;left:542.26px;top:167.89px;line-height:13.60px;font-size:6.8px;font-weight:400;color:#fff;white-space:pre;transform:scaleX(0.8800);transform-origin:0 50%;-webkit-text-stroke:0.12px #fff;">369,00</div>
<div style="position:absolute;left:604.23px;top:167.89px;line-height:13.60px;font-size:6.8px;font-weight:400;color:#fff;white-space:pre;transform:scaleX(0.9099);transform-origin:0 50%;-webkit-text-stroke:0.12px #fff;">PLN</div>
<div style="position:absolute;left:121.63px;top:179.89px;line-height:13.60px;font-size:6.8px;font-weight:400;color:#333;white-space:pre;transform:scaleX(0.8800);transform-origin:0 50%;-webkit-text-stroke:0.12px #333;">N</div>
<div style="position:absolute;left:152.03px;top:179.89px;line-height:13.60px;font-size:6.8px;font-weight:400;color:#333;white-space:pre;transform:scaleX(0.8800);transform-origin:0 50%;-webkit-text-stroke:0.12px #333;">N</div>
<div style="position:absolute;left:172.45px;top:179.89px;line-height:13.60px;font-size:6.8px;font-weight:400;color:#333;white-space:pre;transform:scaleX(0.8664);transform-origin:0 50%;-webkit-text-stroke:0.12px #333;">30-08-2...</div>
<div style="position:absolute;left:204.04px;top:179.89px;line-height:13.60px;font-size:6.8px;font-weight:400;color:#333;white-space:pre;transform:scaleX(0.8800);transform-origin:0 50%;-webkit-text-stroke:0.12px #333;">FS 4/2024</div>
<div style="position:absolute;left:301.25px;top:179.89px;line-height:13.60px;font-size:6.8px;font-weight:400;color:#333;white-space:pre;transform:scaleX(0.8679);transform-origin:0 50%;-webkit-text-stroke:0.12px #333;">Butik JOAN...</div>
<div style="position:absolute;left:379.64px;top:179.89px;line-height:13.60px;font-size:6.8px;font-weight:400;color:#333;white-space:pre;transform:scaleX(0.8715);transform-origin:0 50%;-webkit-text-stroke:0.12px #333;">02-09-2024</div>
<div style="position:absolute;left:542.26px;top:179.89px;line-height:13.60px;font-size:6.8px;font-weight:400;color:#333;white-space:pre;transform:scaleX(0.8800);transform-origin:0 50%;-webkit-text-stroke:0.12px #333;">246,00</div>
<div style="position:absolute;left:604.23px;top:179.89px;line-height:13.60px;font-size:6.8px;font-weight:400;color:#333;white-space:pre;transform:scaleX(0.9099);transform-origin:0 50%;-webkit-text-stroke:0.12px #333;">PLN</div>
<div style="position:absolute;left:121.63px;top:191.89px;line-height:13.60px;font-size:6.8px;font-weight:400;color:#333;white-space:pre;transform:scaleX(0.8800);transform-origin:0 50%;-webkit-text-stroke:0.12px #333;">N</div>
<div style="position:absolute;left:152.03px;top:191.89px;line-height:13.60px;font-size:6.8px;font-weight:400;color:#333;white-space:pre;transform:scaleX(0.8800);transform-origin:0 50%;-webkit-text-stroke:0.12px #333;">N</div>
<div style="position:absolute;left:172.45px;top:191.89px;line-height:13.60px;font-size:6.8px;font-weight:400;color:#333;white-space:pre;transform:scaleX(0.8664);transform-origin:0 50%;-webkit-text-stroke:0.12px #333;">30-08-2...</div>
<div style="position:absolute;left:204.04px;top:191.89px;line-height:13.60px;font-size:6.8px;font-weight:400;color:#333;white-space:pre;transform:scaleX(0.8800);transform-origin:0 50%;-webkit-text-stroke:0.12px #333;">FS 1/2024</div>
<div style="position:absolute;left:301.25px;top:191.89px;line-height:13.60px;font-size:6.8px;font-weight:400;color:#333;white-space:pre;transform:scaleX(0.8679);transform-origin:0 50%;-webkit-text-stroke:0.12px #333;">Butik JOAN...</div>
<div style="position:absolute;left:379.64px;top:191.89px;line-height:13.60px;font-size:6.8px;font-weight:400;color:#333;white-space:pre;transform:scaleX(0.8715);transform-origin:0 50%;-webkit-text-stroke:0.12px #333;">02-09-2024</div>
<div style="position:absolute;left:537.27px;top:191.89px;line-height:13.60px;font-size:6.8px;font-weight:400;color:#333;white-space:pre;transform:scaleX(0.8800);transform-origin:0 50%;-webkit-text-stroke:0.12px #333;">1 230,00</div>
<div style="position:absolute;left:604.23px;top:191.89px;line-height:13.60px;font-size:6.8px;font-weight:400;color:#333;white-space:pre;transform:scaleX(0.9099);transform-origin:0 50%;-webkit-text-stroke:0.12px #333;">PLN</div>
<div style="position:absolute;left:121.63px;top:203.89px;line-height:13.60px;font-size:6.8px;font-weight:400;color:#333;white-space:pre;transform:scaleX(0.8800);transform-origin:0 50%;-webkit-text-stroke:0.12px #333;">N</div>
<div style="position:absolute;left:152.03px;top:203.89px;line-height:13.60px;font-size:6.8px;font-weight:400;color:#333;white-space:pre;transform:scaleX(0.8800);transform-origin:0 50%;-webkit-text-stroke:0.12px #333;">N</div>
<div style="position:absolute;left:172.45px;top:203.89px;line-height:13.60px;font-size:6.8px;font-weight:400;color:#333;white-space:pre;transform:scaleX(0.8664);transform-origin:0 50%;-webkit-text-stroke:0.12px #333;">30-08-2...</div>
<div style="position:absolute;left:204.04px;top:203.89px;line-height:13.60px;font-size:6.8px;font-weight:400;color:#333;white-space:pre;transform:scaleX(0.8800);transform-origin:0 50%;-webkit-text-stroke:0.12px #333;">FS 6/2024</div>
<div style="position:absolute;left:301.25px;top:203.89px;line-height:13.60px;font-size:6.8px;font-weight:400;color:#333;white-space:pre;transform:scaleX(0.8679);transform-origin:0 50%;-webkit-text-stroke:0.12px #333;">Butik JOAN...</div>
<div style="position:absolute;left:379.64px;top:203.89px;line-height:13.60px;font-size:6.8px;font-weight:400;color:#333;white-space:pre;transform:scaleX(0.8715);transform-origin:0 50%;-webkit-text-stroke:0.12px #333;">02-09-2024</div>
<div style="position:absolute;left:542.26px;top:203.89px;line-height:13.60px;font-size:6.8px;font-weight:400;color:#333;white-space:pre;transform:scaleX(0.8800);transform-origin:0 50%;-webkit-text-stroke:0.12px #333;">369,00</div>
<div style="position:absolute;left:604.23px;top:203.89px;line-height:13.60px;font-size:6.8px;font-weight:400;color:#333;white-space:pre;transform:scaleX(0.9099);transform-origin:0 50%;-webkit-text-stroke:0.12px #333;">PLN</div>
<div style="position:absolute;left:117.93px;top:214.89px;line-height:13.60px;font-size:6.8px;font-weight:400;color:#3f79c9;white-space:pre;transform:scaleX(0.9150);transform-origin:0 50%;-webkit-text-stroke:0.12px #3f79c9;">Podmiot:</div>
<div style="position:absolute;left:143.94px;top:214.89px;line-height:13.60px;font-size:6.8px;font-weight:400;color:#2c59b0;white-space:pre;transform:scaleX(0.8800);transform-origin:0 50%;-webkit-text-stroke:0.12px #2c59b0;">Centrum autoryzacji kart płatniczych (1)</div>
<div style="position:absolute;left:548.51px;top:214.89px;line-height:13.60px;font-size:6.8px;font-weight:400;color:#3f79c9;white-space:pre;transform:scaleX(0.8800);transform-origin:0 50%;-webkit-text-stroke:0.12px #3f79c9;">0,00</div>
<div style="position:absolute;left:586.39px;top:214.89px;line-height:13.60px;font-size:6.8px;font-weight:400;color:#3f79c9;white-space:pre;transform:scaleX(0.8800);transform-origin:0 50%;-webkit-text-stroke:0.12px #3f79c9;">30,00</div>
<div style="position:absolute;left:117.93px;top:226.89px;line-height:13.60px;font-size:6.8px;font-weight:400;color:#3f79c9;white-space:pre;transform:scaleX(0.9150);transform-origin:0 50%;-webkit-text-stroke:0.12px #3f79c9;">Podmiot:</div>
<div style="position:absolute;left:143.94px;top:226.89px;line-height:13.60px;font-size:6.8px;font-weight:400;color:#2c59b0;white-space:pre;transform:scaleX(0.8800);transform-origin:0 50%;-webkit-text-stroke:0.12px #2c59b0;">Hurtownia Odziezy , 7312051749, marsz. Józefa Piłsudskiego</div>
<div style="position:absolute;left:539.86px;top:226.89px;line-height:13.60px;font-size:6.8px;font-weight:400;color:#3f79c9;white-space:pre;transform:scaleX(0.8800);transform-origin:0 50%;-webkit-text-stroke:0.12px #3f79c9;">-500,00</div>
<div style="position:absolute;left:574.74px;top:226.89px;line-height:13.60px;font-size:6.8px;font-weight:400;color:#3f79c9;white-space:pre;transform:scaleX(0.8800);transform-origin:0 50%;-webkit-text-stroke:0.12px #3f79c9;">36 900,00</div>
<div style="position:absolute;left:97.63px;top:315.89px;line-height:13.60px;font-size:6.8px;font-weight:400;color:#666;white-space:pre;transform:scaleX(0.9001);transform-origin:0 50%;-webkit-text-stroke:0.12px #666;">WIZYTÓWKA</div>
<div style="position:absolute;left:145.24px;top:315.89px;line-height:13.60px;font-size:6.8px;font-weight:400;color:#666;white-space:pre;transform:scaleX(0.8852);transform-origin:0 50%;-webkit-text-stroke:0.12px #666;">PODSTAWOWE</div>
<div style="position:absolute;left:198.35px;top:315.89px;line-height:13.60px;font-size:6.8px;font-weight:400;color:#666;white-space:pre;transform:scaleX(0.8564);transform-origin:0 50%;-webkit-text-stroke:0.12px #666;">ROZLICZENIA</div>
<div style="position:absolute;left:246.43px;top:315.89px;line-height:13.60px;font-size:6.8px;font-weight:400;color:#666;white-space:pre;transform:scaleX(0.9144);transform-origin:0 50%;-webkit-text-stroke:0.12px #666;">WINDYKACJA</div>
<div style="position:absolute;left:99.04px;top:339.91px;line-height:21.00px;font-size:10.5px;font-weight:400;color:#666;white-space:pre;transform:scaleX(0.8948);transform-origin:0 50%;">RZ</div>
<div style="position:absolute;left:122.31px;top:337.32px;line-height:20.40px;font-size:10.2px;font-weight:400;color:#6a6a6a;white-space:pre;transform:scaleX(0.9652);transform-origin:0 50%;">FS 5/2024</div>
<div style="position:absolute;left:122.54px;top:349.89px;line-height:13.60px;font-size:6.8px;font-weight:400;color:#777;white-space:pre;transform:scaleX(0.8718);transform-origin:0 50%;-webkit-text-stroke:0.12px #777;">Należność  ·  Termin: 02-09-2024</div>
<div style="position:absolute;left:122.54px;top:357.89px;line-height:13.60px;font-size:6.8px;font-weight:400;color:#777;white-space:pre;transform:scaleX(0.8843);transform-origin:0 50%;-webkit-text-stroke:0.12px #777;">Butik JOANNA</div>
<div style="position:absolute;left:638.58px;top:406.89px;line-height:13.60px;font-size:6.8px;font-weight:400;color:#666;white-space:pre;transform:scaleX(1.0261);transform-origin:0 50%;-webkit-text-stroke:0.12px #666;">+/-</div>
<div style="position:absolute;left:638.2px;top:1px;width:10.3px;height:9.5px;background:#fbfbfb;"></div>
<div style="position:absolute;left:279px;top:173.9px;width:181.7px;height:232.79999999999998px;background:rgba(0,0,0,0.38);filter:blur(0.8px);"></div>
<div style="position:absolute;left:278px;top:172.9px;width:181.7px;height:232.79999999999998px;background:#fff;border:1px solid #b3d7f2;border-left:2px solid #a9d1f0;border-right:1px solid #5f9fd4;box-sizing:border-box;"></div>
<div style="position:absolute;left:278.9px;top:393.3px;width:180px;height:12.3px;background:#cae6f3;"></div>
<div style="position:absolute;left:297.7px;top:242.0px;width:156px;height:0.8px;background:#e6e6e6;"></div>
<div style="position:absolute;left:297.7px;top:256.90000000000003px;width:156px;height:0.8px;background:#e6e6e6;"></div>
<div style="position:absolute;left:297.7px;top:339.0px;width:156px;height:0.8px;background:#e6e6e6;"></div>
<div style="position:absolute;left:297.7px;top:365.20000000000005px;width:156px;height:0.8px;background:#e6e6e6;"></div>
<div style="position:absolute;left:297.7px;top:380.0px;width:156px;height:0.8px;background:#e6e6e6;"></div>
<div style="position:absolute;left:283px;top:175px;width:11.5px;height:9.5px;background:#dce9f6;"></div>
<svg style="position:absolute;left:284.5px;top:186.70px" width="8" height="8" viewBox="0 0 8 8"><circle cx="3.25" cy="3.25" r="2.5" fill="none" stroke="#1a8ac4" stroke-width="1.15"/><path d="M5 5 L7.3 7.3" stroke="#1a8ac4" stroke-width="1.3"/></svg>
<svg style="position:absolute;left:284.5px;top:198.00px" width="8" height="8" viewBox="0 0 8 8"><circle cx="3.25" cy="3.25" r="2.5" fill="none" stroke="#1a8ac4" stroke-width="1.15"/><path d="M5 5 L7.3 7.3" stroke="#1a8ac4" stroke-width="1.3"/></svg>
<svg style="position:absolute;left:284.5px;top:209.00px" width="8" height="8" viewBox="0 0 8 8"><path d="M7.7 0.3 L3.4 4.6" stroke="#1a80c0" stroke-width="1.2"/><path d="M3.4 4.2 C2.2 4.2 1.7 5 1.5 5.9 C1.3 6.7 1 7.2 0.3 7.6 C1.8 7.9 3.7 7.3 4 5.5 Z" fill="#1a80c0"/></svg>
<svg style="position:absolute;left:284.5px;top:220.60px" width="8" height="8" viewBox="0 0 8 8"><rect x="2" y="0.5" width="4" height="2.2" fill="none" stroke="#1273b3" stroke-width="0.9"/><path d="M0.3 2.8 H7.7 V6.2 H6.2 V4.8 H1.8 V6.2 H0.3 Z" fill="#1273b3"/><rect x="2.2" y="5.5" width="3.6" height="2.2" fill="none" stroke="#1273b3" stroke-width="0.9"/></svg>
<svg style="position:absolute;left:284.5px;top:231.80px" width="8" height="8" viewBox="0 0 8 8"><rect x="2" y="0.5" width="4" height="2.2" fill="none" stroke="#a5cbe6" stroke-width="0.9"/><path d="M0.3 2.8 H7.7 V6.2 H6.2 V4.8 H1.8 V6.2 H0.3 Z" fill="#a5cbe6"/><rect x="2.2" y="5.5" width="3.6" height="2.2" fill="none" stroke="#a5cbe6" stroke-width="0.9"/></svg>
<svg style="position:absolute;left:285px;top:245.90px" width="7" height="8" viewBox="0 0 7 8"><path d="M0.2 1.4 H6.8 M2.3 1.4 V0.5 H4.7 V1.4" fill="none" stroke="#1a7fc0" stroke-width="0.9"/><path d="M0.8 2.2 H6.2 L5.8 7.8 H1.2 Z" fill="#1a7fc0"/><path d="M2.5 3.2 V6.8 M4.5 3.2 V6.8" stroke="#fff" stroke-width="0.6"/></svg>
<svg style="position:absolute;left:449.6px;top:262.90px" width="3" height="4" viewBox="0 0 3 4"><path d="M0.5 0.4 L2.3 2 L0.5 3.6" fill="none" stroke="#333" stroke-width="0.95"/></svg>
<svg style="position:absolute;left:449.6px;top:274.10px" width="3" height="4" viewBox="0 0 3 4"><path d="M0.5 0.4 L2.3 2 L0.5 3.6" fill="none" stroke="#333" stroke-width="0.95"/></svg>
<svg style="position:absolute;left:449.6px;top:285.40px" width="3" height="4" viewBox="0 0 3 4"><path d="M0.5 0.4 L2.3 2 L0.5 3.6" fill="none" stroke="#333" stroke-width="0.95"/></svg>
<svg style="position:absolute;left:449.6px;top:296.50px" width="3" height="4" viewBox="0 0 3 4"><path d="M0.5 0.4 L2.3 2 L0.5 3.6" fill="none" stroke="#333" stroke-width="0.95"/></svg>
<svg style="position:absolute;left:449.6px;top:345.00px" width="3" height="4" viewBox="0 0 3 4"><path d="M0.5 0.4 L2.3 2 L0.5 3.6" fill="none" stroke="#333" stroke-width="0.95"/></svg>
<svg style="position:absolute;left:449.6px;top:386.00px" width="3" height="4" viewBox="0 0 3 4"><path d="M0.5 0.4 L2.3 2 L0.5 3.6" fill="none" stroke="#333" stroke-width="0.95"/></svg>
<svg style="position:absolute;left:449.6px;top:397.20px" width="3" height="4" viewBox="0 0 3 4"><path d="M0.5 0.4 L2.3 2 L0.5 3.6" fill="none" stroke="#333" stroke-width="0.95"/></svg>
<div style="position:absolute;left:641.02px;top:-1.72px;line-height:16.00px;font-size:8px;font-weight:700;color:#111;white-space:pre;">1</div>
<div style="position:absolute;left:297.34px;top:173.16px;line-height:13.20px;font-size:6.6px;font-weight:400;color:#2a2a2a;white-space:pre;transform:scaleX(0.9200);transform-origin:0 50%;-webkit-text-stroke:0.12px #2a2a2a;">Rozrachunek</div>
<div style="position:absolute;left:414.14px;top:173.16px;line-height:13.20px;font-size:6.6px;font-weight:400;color:#2a2a2a;white-space:pre;transform:scaleX(0.9200);transform-origin:0 50%;-webkit-text-stroke:0.12px #2a2a2a;">Insert</div>
<div style="position:absolute;left:284.18px;top:173.16px;line-height:13.20px;font-size:6.6px;font-weight:700;color:#2f7fc4;white-space:pre;transform:scaleX(1.0494);transform-origin:0 50%;">RZ</div>
<div style="position:absolute;left:297.34px;top:184.16px;line-height:13.20px;font-size:6.6px;font-weight:700;color:#2a2a2a;white-space:pre;transform:scaleX(0.9200);transform-origin:0 50%;">Pokaż</div>
<div style="position:absolute;left:414.14px;top:184.16px;line-height:13.20px;font-size:6.6px;font-weight:700;color:#2a2a2a;white-space:pre;transform:scaleX(0.9200);transform-origin:0 50%;">F3</div>
<div style="position:absolute;left:297.34px;top:195.16px;line-height:13.20px;font-size:6.6px;font-weight:400;color:#2a2a2a;white-space:pre;transform:scaleX(0.9200);transform-origin:0 50%;-webkit-text-stroke:0.12px #2a2a2a;">Pokaż dokument źródłowy</div>
<div style="position:absolute;left:414.14px;top:195.16px;line-height:13.20px;font-size:6.6px;font-weight:400;color:#2a2a2a;white-space:pre;transform:scaleX(0.9200);transform-origin:0 50%;-webkit-text-stroke:0.12px #2a2a2a;">Ctrl+F3</div>
<div style="position:absolute;left:297.34px;top:207.16px;line-height:13.20px;font-size:6.6px;font-weight:400;color:#2a2a2a;white-space:pre;transform:scaleX(0.9200);transform-origin:0 50%;-webkit-text-stroke:0.12px #2a2a2a;">Popraw</div>
<div style="position:absolute;left:414.14px;top:207.16px;line-height:13.20px;font-size:6.6px;font-weight:400;color:#2a2a2a;white-space:pre;transform:scaleX(0.9200);transform-origin:0 50%;-webkit-text-stroke:0.12px #2a2a2a;">F4</div>
<div style="position:absolute;left:297.34px;top:218.16px;line-height:13.20px;font-size:6.6px;font-weight:400;color:#2a2a2a;white-space:pre;transform:scaleX(0.9200);transform-origin:0 50%;-webkit-text-stroke:0.12px #2a2a2a;">Drukuj</div>
<div style="position:absolute;left:414.14px;top:218.16px;line-height:13.20px;font-size:6.6px;font-weight:400;color:#2a2a2a;white-space:pre;transform:scaleX(0.9200);transform-origin:0 50%;-webkit-text-stroke:0.12px #2a2a2a;">Ctrl+P</div>
<div style="position:absolute;left:297.34px;top:229.16px;line-height:13.20px;font-size:6.6px;font-weight:400;color:#a8a8a8;white-space:pre;transform:scaleX(0.9200);transform-origin:0 50%;-webkit-text-stroke:0.12px #a8a8a8;">Drukuj raport</div>
<div style="position:absolute;left:414.14px;top:229.16px;line-height:13.20px;font-size:6.6px;font-weight:400;color:#a8a8a8;white-space:pre;transform:scaleX(0.9200);transform-origin:0 50%;-webkit-text-stroke:0.12px #a8a8a8;">Ctrl+Shift+R</div>
<div style="position:absolute;left:297.34px;top:243.16px;line-height:13.20px;font-size:6.6px;font-weight:400;color:#2a2a2a;white-space:pre;transform:scaleX(0.9200);transform-origin:0 50%;-webkit-text-stroke:0.12px #2a2a2a;">Usuń</div>
<div style="position:absolute;left:414.14px;top:243.16px;line-height:13.20px;font-size:6.6px;font-weight:400;color:#2a2a2a;white-space:pre;transform:scaleX(0.9200);transform-origin:0 50%;-webkit-text-stroke:0.12px #2a2a2a;">Delete</div>
<div style="position:absolute;left:297.34px;top:258.16px;line-height:13.20px;font-size:6.6px;font-weight:400;color:#2a2a2a;white-space:pre;transform:scaleX(0.9200);transform-origin:0 50%;-webkit-text-stroke:0.12px #2a2a2a;">Operacje</div>
<div style="position:absolute;left:297.34px;top:269.16px;line-height:13.20px;font-size:6.6px;font-weight:400;color:#2a2a2a;white-space:pre;transform:scaleX(0.9200);transform-origin:0 50%;-webkit-text-stroke:0.12px #2a2a2a;">Rozlicz</div>
<div style="position:absolute;left:297.34px;top:281.16px;line-height:13.20px;font-size:6.6px;font-weight:400;color:#2a2a2a;white-space:pre;transform:scaleX(0.9200);transform-origin:0 50%;-webkit-text-stroke:0.12px #2a2a2a;">Windykacja</div>
<div style="position:absolute;left:297.34px;top:292.16px;line-height:13.20px;font-size:6.6px;font-weight:400;color:#2a2a2a;white-space:pre;transform:scaleX(0.9200);transform-origin:0 50%;-webkit-text-stroke:0.12px #2a2a2a;">Podmiot</div>
<div style="position:absolute;left:297.34px;top:303.16px;line-height:13.20px;font-size:6.6px;font-weight:400;color:#2a2a2a;white-space:pre;transform:scaleX(0.9200);transform-origin:0 50%;-webkit-text-stroke:0.12px #2a2a2a;">Zmień domyślny sposób rozliczania</div>
<div style="position:absolute;left:297.34px;top:315.16px;line-height:13.20px;font-size:6.6px;font-weight:400;color:#2a2a2a;white-space:pre;transform:scaleX(0.9200);transform-origin:0 50%;-webkit-text-stroke:0.12px #2a2a2a;">Załączniki</div>
<div style="position:absolute;left:414.14px;top:315.16px;line-height:13.20px;font-size:6.6px;font-weight:400;color:#2a2a2a;white-space:pre;transform:scaleX(0.9200);transform-origin:0 50%;-webkit-text-stroke:0.12px #2a2a2a;">Ctrl+B</div>
<div style="position:absolute;left:297.34px;top:326.16px;line-height:13.20px;font-size:6.6px;font-weight:400;color:#2a2a2a;white-space:pre;transform:scaleX(0.9200);transform-origin:0 50%;-webkit-text-stroke:0.12px #2a2a2a;">Dokumenty powiązane</div>
<div style="position:absolute;left:414.14px;top:326.16px;line-height:13.20px;font-size:6.6px;font-weight:400;color:#2a2a2a;white-space:pre;transform:scaleX(0.9200);transform-origin:0 50%;-webkit-text-stroke:0.12px #2a2a2a;">Ctrl+E</div>
<div style="position:absolute;left:297.34px;top:340.16px;line-height:13.20px;font-size:6.6px;font-weight:400;color:#2a2a2a;white-space:pre;transform:scaleX(0.9200);transform-origin:0 50%;-webkit-text-stroke:0.12px #2a2a2a;">Dodaj działanie</div>
<div style="position:absolute;left:297.34px;top:351.16px;line-height:13.20px;font-size:6.6px;font-weight:400;color:#2a2a2a;white-space:pre;transform:scaleX(0.9200);transform-origin:0 50%;-webkit-text-stroke:0.12px #2a2a2a;">Pokaż listę działań</div>
<div style="position:absolute;left:414.14px;top:351.16px;line-height:13.20px;font-size:6.6px;font-weight:400;color:#2a2a2a;white-space:pre;transform:scaleX(0.9200);transform-origin:0 50%;-webkit-text-stroke:0.12px #2a2a2a;">Ctrl+Shift+D</div>
<div style="position:absolute;left:297.34px;top:367.16px;line-height:13.20px;font-size:6.6px;font-weight:400;color:#2a2a2a;white-space:pre;transform:scaleX(0.9200);transform-origin:0 50%;-webkit-text-stroke:0.12px #2a2a2a;">Podgląd w oknie</div>
<div style="position:absolute;left:414.14px;top:367.16px;line-height:13.20px;font-size:6.6px;font-weight:400;color:#2a2a2a;white-space:pre;transform:scaleX(0.9200);transform-origin:0 50%;-webkit-text-stroke:0.12px #2a2a2a;">F9</div>
<div style="position:absolute;left:297.34px;top:381.16px;line-height:13.20px;font-size:6.6px;font-weight:400;color:#2a2a2a;white-space:pre;transform:scaleX(0.9200);transform-origin:0 50%;-webkit-text-stroke:0.12px #2a2a2a;">Flagi</div>
<div style="position:absolute;left:297.34px;top:393.16px;line-height:13.20px;font-size:6.6px;font-weight:400;color:#2a2a2a;white-space:pre;transform:scaleX(0.9200);transform-origin:0 50%;-webkit-text-stroke:0.12px #2a2a2a;">Operacje na liście</div>
<div style="position:absolute;left:459.6px;top:289.8px;width:151.69999999999993px;height:114.80000000000001px;background:rgba(0,0,0,0.38);filter:blur(0.8px);"></div>
<div style="position:absolute;left:458.6px;top:288.8px;width:151.69999999999993px;height:114.80000000000001px;background:#fff;border:1px solid #cfe6f6;border-right:1px solid #9aa9b5;box-sizing:border-box;"></div>
<div style="position:absolute;left:459px;top:391.2px;width:151.5px;height:12.6px;background:#cae6f3;"></div>
<svg style="position:absolute;left:600.8px;top:383.40px" width="3" height="4" viewBox="0 0 3 4"><path d="M0.5 0.4 L2.3 2 L0.5 3.6" fill="none" stroke="#333" stroke-width="0.95"/></svg>
<svg style="position:absolute;left:464.3px;top:370.8px" width="6" height="6" viewBox="0 0 6 6"><path d="M0 0.2 H6 L3.6 3 V6 L2.4 5.2 V3 Z" fill="#1a80c0"/></svg>
<div style="position:absolute;left:476.44px;top:289.16px;line-height:13.20px;font-size:6.6px;font-weight:400;color:#2a2a2a;white-space:pre;transform:scaleX(0.9200);transform-origin:0 50%;-webkit-text-stroke:0.12px #2a2a2a;">Odśwież</div>
<div style="position:absolute;left:553.14px;top:289.16px;line-height:13.20px;font-size:6.6px;font-weight:400;color:#2a2a2a;white-space:pre;transform:scaleX(0.9200);transform-origin:0 50%;-webkit-text-stroke:0.12px #2a2a2a;">F5</div>
<div style="position:absolute;left:476.44px;top:300.16px;line-height:13.20px;font-size:6.6px;font-weight:400;color:#2a2a2a;white-space:pre;transform:scaleX(0.9200);transform-origin:0 50%;-webkit-text-stroke:0.12px #2a2a2a;">Kopiuj zaznaczone</div>
<div style="position:absolute;left:553.14px;top:300.16px;line-height:13.20px;font-size:6.6px;font-weight:400;color:#2a2a2a;white-space:pre;transform:scaleX(0.9200);transform-origin:0 50%;-webkit-text-stroke:0.12px #2a2a2a;">Ctrl+Alt+Shift+C</div>
<div style="position:absolute;left:476.44px;top:311.16px;line-height:13.20px;font-size:6.6px;font-weight:400;color:#2a2a2a;white-space:pre;transform:scaleX(0.9200);transform-origin:0 50%;-webkit-text-stroke:0.12px #2a2a2a;">Kopiuj całą listę</div>
<div style="position:absolute;left:553.14px;top:311.16px;line-height:13.20px;font-size:6.6px;font-weight:400;color:#2a2a2a;white-space:pre;transform:scaleX(0.9200);transform-origin:0 50%;-webkit-text-stroke:0.12px #2a2a2a;">Ctrl+Shift+C</div>
<div style="position:absolute;left:476.44px;top:323.16px;line-height:13.20px;font-size:6.6px;font-weight:400;color:#2a2a2a;white-space:pre;transform:scaleX(0.9200);transform-origin:0 50%;-webkit-text-stroke:0.12px #2a2a2a;">Eksportuj do Excela</div>
<div style="position:absolute;left:476.44px;top:334.16px;line-height:13.20px;font-size:6.6px;font-weight:400;color:#2a2a2a;white-space:pre;transform:scaleX(0.9200);transform-origin:0 50%;-webkit-text-stroke:0.12px #2a2a2a;">Szukaj</div>
<div style="position:absolute;left:553.14px;top:334.16px;line-height:13.20px;font-size:6.6px;font-weight:400;color:#2a2a2a;white-space:pre;transform:scaleX(0.9200);transform-origin:0 50%;-webkit-text-stroke:0.12px #2a2a2a;">Ctrl+F</div>
<div style="position:absolute;left:476.44px;top:345.16px;line-height:13.20px;font-size:6.6px;font-weight:400;color:#2a2a2a;white-space:pre;transform:scaleX(0.9200);transform-origin:0 50%;-webkit-text-stroke:0.12px #2a2a2a;">Drukuj listę</div>
<div style="position:absolute;left:553.14px;top:345.16px;line-height:13.20px;font-size:6.6px;font-weight:400;color:#2a2a2a;white-space:pre;transform:scaleX(0.9200);transform-origin:0 50%;-webkit-text-stroke:0.12px #2a2a2a;">Ctrl+Shift+P</div>
<div style="position:absolute;left:476.44px;top:356.16px;line-height:13.20px;font-size:6.6px;font-weight:400;color:#2a2a2a;white-space:pre;transform:scaleX(0.9200);transform-origin:0 50%;-webkit-text-stroke:0.12px #2a2a2a;">Filtruj</div>
<div style="position:absolute;left:553.14px;top:356.16px;line-height:13.20px;font-size:6.6px;font-weight:400;color:#2a2a2a;white-space:pre;transform:scaleX(0.9200);transform-origin:0 50%;-webkit-text-stroke:0.12px #2a2a2a;">F8</div>
<div style="position:absolute;left:476.44px;top:367.16px;line-height:13.20px;font-size:6.6px;font-weight:400;color:#2a2a2a;white-space:pre;transform:scaleX(0.9200);transform-origin:0 50%;-webkit-text-stroke:0.12px #2a2a2a;">Filtruj wg kolumn</div>
<div style="position:absolute;left:553.14px;top:367.16px;line-height:13.20px;font-size:6.6px;font-weight:400;color:#2a2a2a;white-space:pre;transform:scaleX(0.9200);transform-origin:0 50%;-webkit-text-stroke:0.12px #2a2a2a;">Shift+F8</div>
<div style="position:absolute;left:476.44px;top:379.16px;line-height:13.20px;font-size:6.6px;font-weight:400;color:#2a2a2a;white-space:pre;transform:scaleX(0.9200);transform-origin:0 50%;-webkit-text-stroke:0.12px #2a2a2a;">Operacja na grupach</div>
<div style="position:absolute;left:476.44px;top:390.16px;line-height:13.20px;font-size:6.6px;font-weight:400;color:#2a2a2a;white-space:pre;transform:scaleX(0.9200);transform-origin:0 50%;-webkit-text-stroke:0.12px #2a2a2a;">Konfiguracja widoku</div>
<div style="position:absolute;left:553.14px;top:390.16px;line-height:13.20px;font-size:6.6px;font-weight:400;color:#2a2a2a;white-space:pre;transform:scaleX(0.9200);transform-origin:0 50%;-webkit-text-stroke:0.12px #2a2a2a;">Ctrl+Shift+L</div>
<div style="position:absolute;left:9.2px;top:116.4px;width:42.099999999999994px;height:10.399999999999991px;border:1.45px solid #de2a2c;border-radius:3px;box-sizing:border-box;"></div>
<div style="position:absolute;left:141.2px;top:69.1px;width:67.20000000000002px;height:13.900000000000006px;border:1.45px solid #de2a2c;border-radius:3px;box-sizing:border-box;"></div>
<div style="position:absolute;left:278.6px;top:393.2px;width:180.39999999999998px;height:12.5px;border:1.45px solid #de2a2c;border-radius:3px;box-sizing:border-box;"></div>
<div style="position:absolute;left:458.9px;top:391.1px;width:152.10000000000002px;height:12.799999999999955px;border:1.45px solid #de2a2c;border-radius:3px;box-sizing:border-box;"></div>
<svg style="position:absolute;left:0;top:0" width="650" height="420" viewBox="0 0 650 420"><path d="M75 96.6 L76.4 99.9 L57.9 107.9 L58.7 111.5 L47 110.8 L54 102.4 L55.9 105.1 Z" fill="#de2a2c"/></svg>
<div style="position:absolute;left:68.2px;top:83.7px;width:15.2px;height:15.2px;background:rgba(0,0,0,0.25);border-radius:50%;filter:blur(0.8px);"></div>
<div style="position:absolute;left:67.60000000000001px;top:82.9px;width:15.2px;height:15.2px;background:radial-gradient(circle, #d93636 0%, #dc3434 60%, #f02a2a 85%, #ee2626 100%);border-radius:50%;"></div>
<div style="position:absolute;left:23.4px;top:127.2px;width:14.8px;height:14.8px;background:rgba(0,0,0,0.25);border-radius:50%;filter:blur(0.8px);"></div>
<div style="position:absolute;left:22.799999999999997px;top:126.4px;width:14.8px;height:14.8px;background:radial-gradient(circle, #d93636 0%, #dc3434 60%, #f02a2a 85%, #ee2626 100%);border-radius:50%;"></div>
<div style="position:absolute;left:181.2px;top:56.199999999999996px;width:15.0px;height:15.0px;background:rgba(0,0,0,0.25);border-radius:50%;filter:blur(0.8px);"></div>
<div style="position:absolute;left:180.6px;top:55.4px;width:15.0px;height:15.0px;background:radial-gradient(circle, #d93636 0%, #dc3434 60%, #f02a2a 85%, #ee2626 100%);border-radius:50%;"></div>
<div style="position:absolute;left:358.7px;top:380.0px;width:15.2px;height:15.2px;background:rgba(0,0,0,0.25);border-radius:50%;filter:blur(0.8px);"></div>
<div style="position:absolute;left:358.09999999999997px;top:379.2px;width:15.2px;height:15.2px;background:radial-gradient(circle, #d93636 0%, #dc3434 60%, #f02a2a 85%, #ee2626 100%);border-radius:50%;"></div>
<div style="position:absolute;left:531.9px;top:377.3px;width:15.0px;height:15.0px;background:rgba(0,0,0,0.25);border-radius:50%;filter:blur(0.8px);"></div>
<div style="position:absolute;left:531.3px;top:376.5px;width:15.0px;height:15.0px;background:radial-gradient(circle, #d93636 0%, #dc3434 60%, #f02a2a 85%, #ee2626 100%);border-radius:50%;"></div>
<div style="position:absolute;left:73.33px;top:83.01px;line-height:16.40px;font-size:8.2px;font-weight:400;color:#fff;white-space:pre;transform:scaleX(0.8200);transform-origin:0 50%;-webkit-text-stroke:0.12px #fff;">1</div>
<div style="position:absolute;left:28.33px;top:126.01px;line-height:16.40px;font-size:8.2px;font-weight:400;color:#fff;white-space:pre;transform:scaleX(0.8200);transform-origin:0 50%;-webkit-text-stroke:0.12px #fff;">2</div>
<div style="position:absolute;left:186.23px;top:55.01px;line-height:16.40px;font-size:8.2px;font-weight:400;color:#fff;white-space:pre;transform:scaleX(0.8200);transform-origin:0 50%;-webkit-text-stroke:0.12px #fff;">3</div>
<div style="position:absolute;left:363.83px;top:379.01px;line-height:16.40px;font-size:8.2px;font-weight:400;color:#fff;white-space:pre;transform:scaleX(0.8200);transform-origin:0 50%;-webkit-text-stroke:0.12px #fff;">4</div>
<div style="position:absolute;left:536.93px;top:376.01px;line-height:16.40px;font-size:8.2px;font-weight:400;color:#fff;white-space:pre;transform:scaleX(0.8200);transform-origin:0 50%;-webkit-text-stroke:0.12px #fff;">5</div>
</body></html>
